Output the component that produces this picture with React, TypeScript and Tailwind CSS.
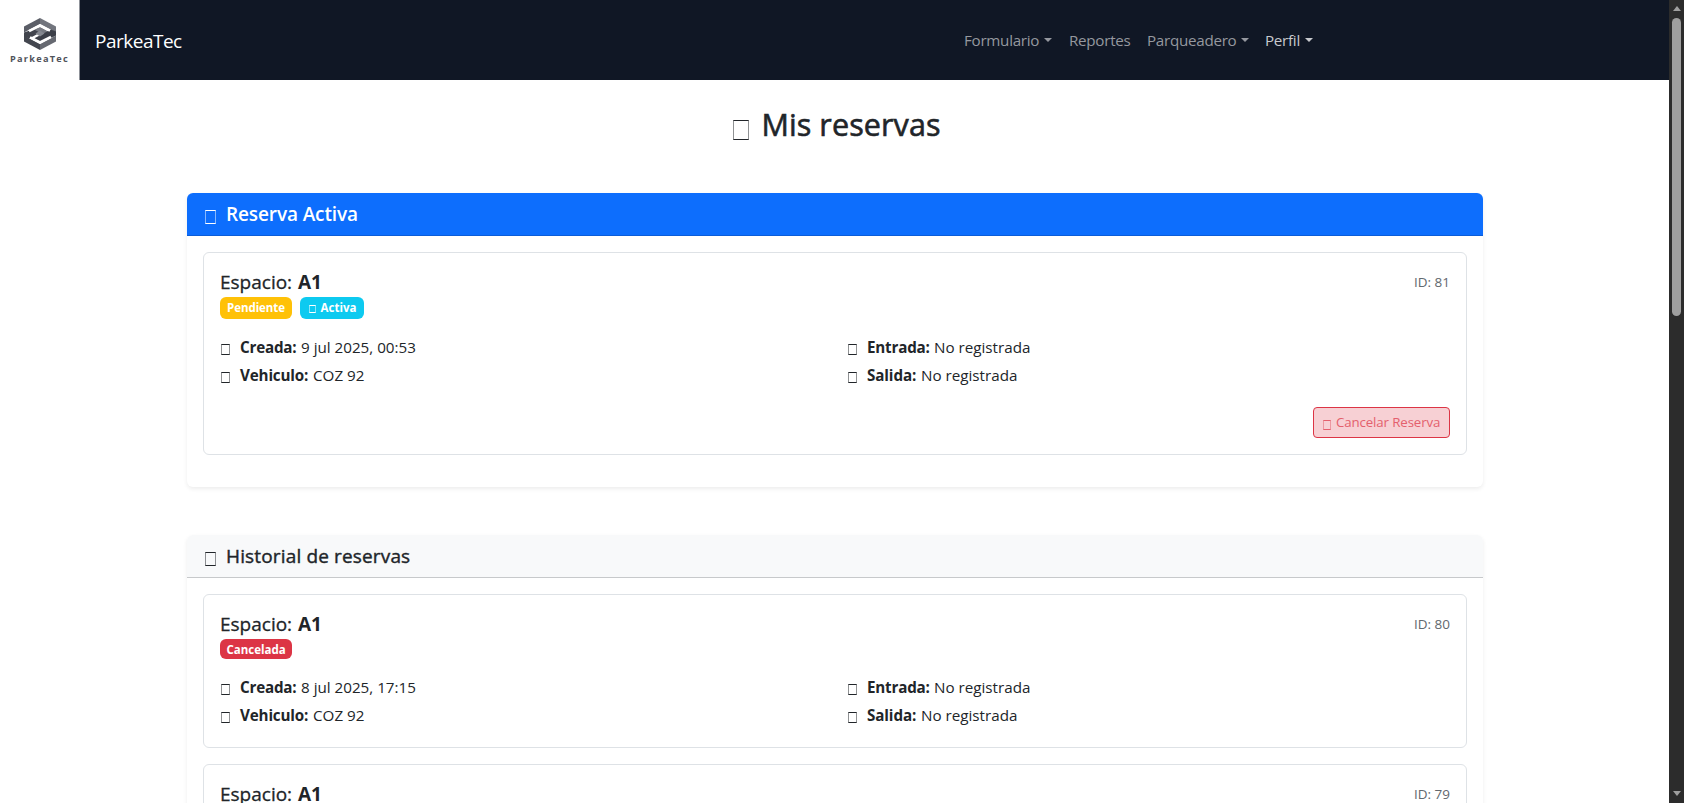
import type { ReactNode } from "react";

function Glyph({ className }: { className: string }) {
  return (
    <span className={`box-border inline-block shrink-0 border border-x-current/50 border-y-current ${className}`} />
  );
}

function Caret() {
  return (
    <span className="mt-px ml-[5px] h-0 w-0 border-x-[4.8px] border-t-[4.8px] border-x-transparent border-t-current" />
  );
}

function Logo() {
  return (
    <div className="flex h-20 w-20 shrink-0 flex-col items-center border-r border-[#8f9299] bg-white pt-[18px]">
      <svg width="34" height="32" viewBox="0 0 34 32">
        <path d="M17 0 L1 8.500 V14.500 L17 6Z" fill="#5b5e67" />
        <path d="M17 0 L33 8.500 V14.500 L17 6Z" fill="#72757d" />
        <path d="M17 32 L1 23.500 V17.500 L17 26Z" fill="#43464f" />
        <path d="M17 32 L33 23.500 V17.500 L17 26Z" fill="#666971" />
        <path d="M1 14.500 V18.500 L6 20.500 L22 12 L17 9Z" fill="#41444d" />
        <path d="M17 9 L33 17.500 L28 20.500 L12 12Z" fill="#777a82" />
        <path d="M33 13.500 V17.500 L17 23.500 L11 20.500 L28 11.500Z" fill="#3c3f48" />
        <path d="M17 12.500 L21.500 15.500 L17 18.500 L12.500 15.500Z" fill="#858890" />
        <path d="M6 13.200 L17 7.500 L27 12.700" fill="none" stroke="#fff" strokeWidth="2.600" />
        <path d="M28 18.800 L17 24.500 L7 19.300" fill="none" stroke="#fff" strokeWidth="2.600" />
      </svg>
      <span className="mt-[3px] whitespace-nowrap text-[9.200px] leading-[11px] font-bold tracking-[1.250px] text-[#50535b]">
        ParkeaTec
      </span>
    </div>
  );
}

function Detail({ label, labelClass, children }: { label: string; labelClass: string; children: ReactNode }) {
  return (
    <div className="flex h-7 items-center whitespace-nowrap text-[15.200px]">
      <Glyph className="mt-[5px] mr-[10px] ml-px h-[11px] w-[9px]" />
      <span className={`font-bold ${labelClass}`}>{label}</span>
      <span>{children}</span>
    </div>
  );
}

function Reservation({ id, created, badges, children, className }: { id: number; created: string; badges?: ReactNode; children?: ReactNode; className: string }) {
  return (
    <article className={`rounded-[6px] border border-[#dee2e6] px-4 pt-4 ${className}`}>
      <div className="flex h-[27px] items-center justify-between">
        <h3 className="flex whitespace-nowrap text-[19px]">
          <span className="w-[78px] [-webkit-text-stroke:0.3px]">Espacio:</span>
          <span className="font-bold">A1</span>
        </h3>
        <span className="text-[13.500px] text-[#62686e]">ID: {id}</span>
      </div>
      {badges}
      <div className="grid grid-cols-[627px_1fr]">
        <Detail label="Creada:" labelClass="w-[61px] tracking-[-0.2px]">{created}</Detail>
        <Detail label="Entrada:" labelClass="w-[67px] tracking-[-0.2px]">No registrada</Detail>
        <Detail label="Vehiculo:" labelClass="w-[73px] tracking-[-0.15px]">COZ 92</Detail>
        <Detail label="Salida:" labelClass="w-[54px] tracking-[-0.1px]">No registrada</Detail>
      </div>
      {children}
    </article>
  );
}

function Cancelled() {
  return (
    <div className="mt-px mb-[14px] flex">
      <span className="flex h-5 w-[72px] items-center justify-center rounded-[6px] bg-[#dc3545] pt-px text-[11.500px] font-bold text-white">
        Cancelada
      </span>
    </div>
  );
}

export default function App() {
  return (
    <div className="flex h-[803px] w-[1684px] overflow-hidden bg-white font-['Open_Sans',sans-serif] text-[#212529]">
      <div className="flex w-[1669px] flex-col">
        <header className="flex h-20 shrink-0 items-center bg-[#101725] text-[15.200px] text-[#95989f]">
          <Logo />
          <span className="ml-[15px] w-[869px] pt-0.5 text-[19px] tracking-[-0.5px] text-white">ParkeaTec</span>
          <nav className="flex items-center tracking-[-0.28px] whitespace-nowrap">
            <span className="flex w-[105px] items-center">Formulario<Caret /></span>
            <span className="w-[78px]">Reportes</span>
            <span className="flex w-[118px] items-center">Parqueadero<Caret /></span>
            <span className="flex items-center text-[#c7c9cd]">Perfil<Caret /></span>
          </nav>
        </header>
        <main className="ml-[187px] w-[1296px]">
          <h1 className="mt-6 flex h-[42px] items-center justify-center pl-[4px] whitespace-nowrap text-[30.500px] tracking-[0.1px] [-webkit-text-stroke:0.6px]">
            <Glyph className="mt-[9px] mr-[12px] h-5 w-4" />
            Mis reservas
          </h1>
          <section className="mt-[47px] h-[294px] rounded-[6px] shadow-[0_2px_4px_rgba(0,0,0,0.075)]">
            <h2 className="flex h-[43px] items-center rounded-t-[6px] border-b border-[#0c5dd8] bg-[#0d6efd] pl-[18px] text-[19px] font-semibold tracking-[-0.12px] text-white">
              <Glyph className="mt-[6px] mr-[10px] h-[14px] w-[11px]" />
              Reserva Activa
            </h2>
            <div className="px-4 pt-4">
              <Reservation
                id={81}
                created="9 jul 2025, 00:53"
                className="h-[203px]"
                badges={
                  <div className="mt-px mb-[14px] flex gap-2 text-[11.500px] font-bold text-white">
                    <span className="flex h-[22px] w-[72px] items-center justify-center rounded-[6px] bg-[#ffc107] tracking-[-0.08px]">Pendiente</span>
                    <span className="flex h-[22px] w-16 items-center justify-center rounded-[6px] bg-[#0dcaf0] pl-px">
                      <Glyph className="mt-[2px] mr-[5px] h-2 w-[7px]" />
                      Activa
                    </span>
                  </div>
                }
              >
                <div className="mt-[18px] flex justify-end">
                  <button className="flex h-[31px] w-[137px] items-center rounded-[4px] border border-[#dc3545] bg-[#f7d0d4] pt-px pl-[9px] text-[13.300px] tracking-[-0.13px] whitespace-nowrap text-[#e4606d]">
                    <Glyph className="mt-[3px] mr-[5px] h-[10px] w-2" />
                    Cancelar Reserva
                  </button>
                </div>
              </Reservation>
            </div>
          </section>
          <section className="mt-12 h-[500px] rounded-[6px] shadow-[0_2px_4px_rgba(0,0,0,0.075)]">
            <h2 className="flex h-[43px] items-center rounded-t-[6px] border-b border-[#c7c9cb] bg-[#f8f9fa] pl-[18px] text-[19px] tracking-[0.15px] [-webkit-text-stroke:0.4px]">
              <Glyph className="mt-[6px] mr-[10px] h-[14px] w-[11px]" />
              Historial de reservas
            </h2>
            <div className="flex flex-col gap-4 px-4 pt-4">
              <Reservation id={80} created="8 jul 2025, 17:15" className="h-[154px]" badges={<Cancelled />} />
              <Reservation id={79} created="8 jul 2025, 17:10" className="h-[154px]" badges={<Cancelled />} />
            </div>
          </section>
        </main>
      </div>
      <aside className="flex w-[15px] flex-col items-center bg-[#2c2c2c]">
        <span className="mt-[6px] h-0 w-0 border-x-[4.500px] border-b-[5px] border-x-transparent border-b-[#9f9f9f]" />
        <span className="mt-[7px] h-[298px] w-[9px] rounded-full bg-[#9f9f9f]" />
        <span className="mt-auto mb-[7px] h-0 w-0 border-x-[4.500px] border-t-[5px] border-x-transparent border-t-[#9f9f9f]" />
      </aside>
    </div>
  );
}
